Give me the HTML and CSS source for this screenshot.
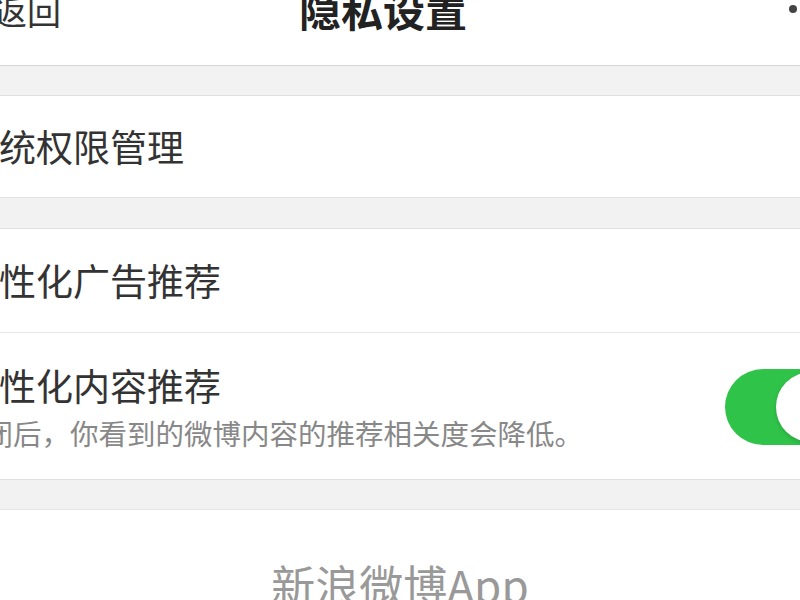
FILE: index.html
```html
<!DOCTYPE html>
<html lang="zh-CN">

<head>
    <meta charset="UTF-8">
    <title>隐私设置</title>
    <link rel="stylesheet" href="styles.css">
</head>

<body>
    <div class="nav">
        <span class="back">返回</span>
        <span class="title">隐私设置</span>
        <span class="more"><i></i></span>
    </div>

    <div class="gap"></div>
    <div class="group">
        <div class="cell">
            <div class="cell-text">
                <div class="cell-title">系统权限管理</div>
            </div>
        </div>
    </div>

    <div class="gap gap-wide"></div>
    <div class="group">
        <div class="cell cell-mid">
            <div class="cell-text">
                <div class="cell-title">个性化广告推荐</div>
            </div>
        </div>
        <div class="cell cell-tall">
            <div class="cell-text">
                <div class="cell-title">个性化内容推荐</div>
                <div class="cell-sub">关闭后，你看到的微博内容的推荐相关度会降低。</div>
            </div>
            <span class="switch on"><i></i></span>
        </div>
    </div>

    <div class="gap"></div>
    <div class="footer">新浪微博App</div>
</body>

</html>
```

FILE: styles.css
```css
html,
body {
    margin: 0;
    padding: 0;
}

body {
    width: 800px;
    height: 600px;
    overflow: hidden;
    background-color: #f2f2f2;
    font-family: "Noto Sans CJK SC", "Noto Sans", sans-serif;
    color: #333;
}

.nav {
    display: grid;
    grid-template-columns: 1fr auto 1fr;
    align-items: start;
    width: 834px;
    height: 65px;
    margin-left: -34px;
    background-color: #fff;
    border-bottom: 1px solid #d6d6d6;
}

.back {
    justify-self: start;
    margin-left: 27px;
    margin-top: -6px;
    font-size: 34px;
    line-height: 1;
    color: #333;
}

.title {
    margin-top: -12px;
    font-size: 42px;
    line-height: 1;
    font-weight: bold;
    color: #222;
}

.more {
    justify-self: end;
    margin-right: 3px;
    padding-top: 5px;
}

.more i {
    display: block;
    width: 8px;
    height: 8px;
    border-radius: 50%;
    background-color: #444;
}

.gap {
    height: 29px;
}

.gap-wide {
    height: 30px;
}

.group {
    background-color: #fff;
    border-top: 1px solid #e0e0e0;
    border-bottom: 1px solid #e0e0e0;
}

.cell {
    display: flex;
    align-items: center;
    justify-content: space-between;
    height: 101px;
    overflow: hidden;
}

.cell + .cell {
    border-top: 1px solid #e6e6e6;
}

.cell-mid {
    height: 103px;
}

.cell-tall {
    height: 147px;
    padding-top: 2px;
    box-sizing: border-box;
}

.cell-text {
    margin-left: -38px;
}

.cell-title {
    font-size: 37px;
    line-height: 1;
    white-space: nowrap;
}

.cell-sub {
    margin-top: 15px;
    margin-left: -6px;
    font-size: 28.5px;
    line-height: 1;
    color: #888;
    white-space: nowrap;
}

.switch {
    flex: none;
    display: flex;
    align-items: center;
    justify-content: flex-end;
    width: 124px;
    height: 76px;
    margin-right: -49px;
    padding: 0 3px;
    box-sizing: border-box;
    border-radius: 38px;
    background-color: #e5e5e5;
}

.switch.on {
    background-color: #30c34a;
}

.switch i {
    display: block;
    width: 70px;
    height: 70px;
    border-radius: 50%;
    background-color: #fff;
    box-shadow: 0 2px 4px rgba(0, 0, 0, 0.15);
}

.footer {
    height: 100px;
    padding-top: 52px;
    box-sizing: border-box;
    background-color: #fff;
    border-top: 1px solid #e6e6e6;
    text-align: center;
    font-size: 44px;
    line-height: 1;
    color: #999;
}
```
